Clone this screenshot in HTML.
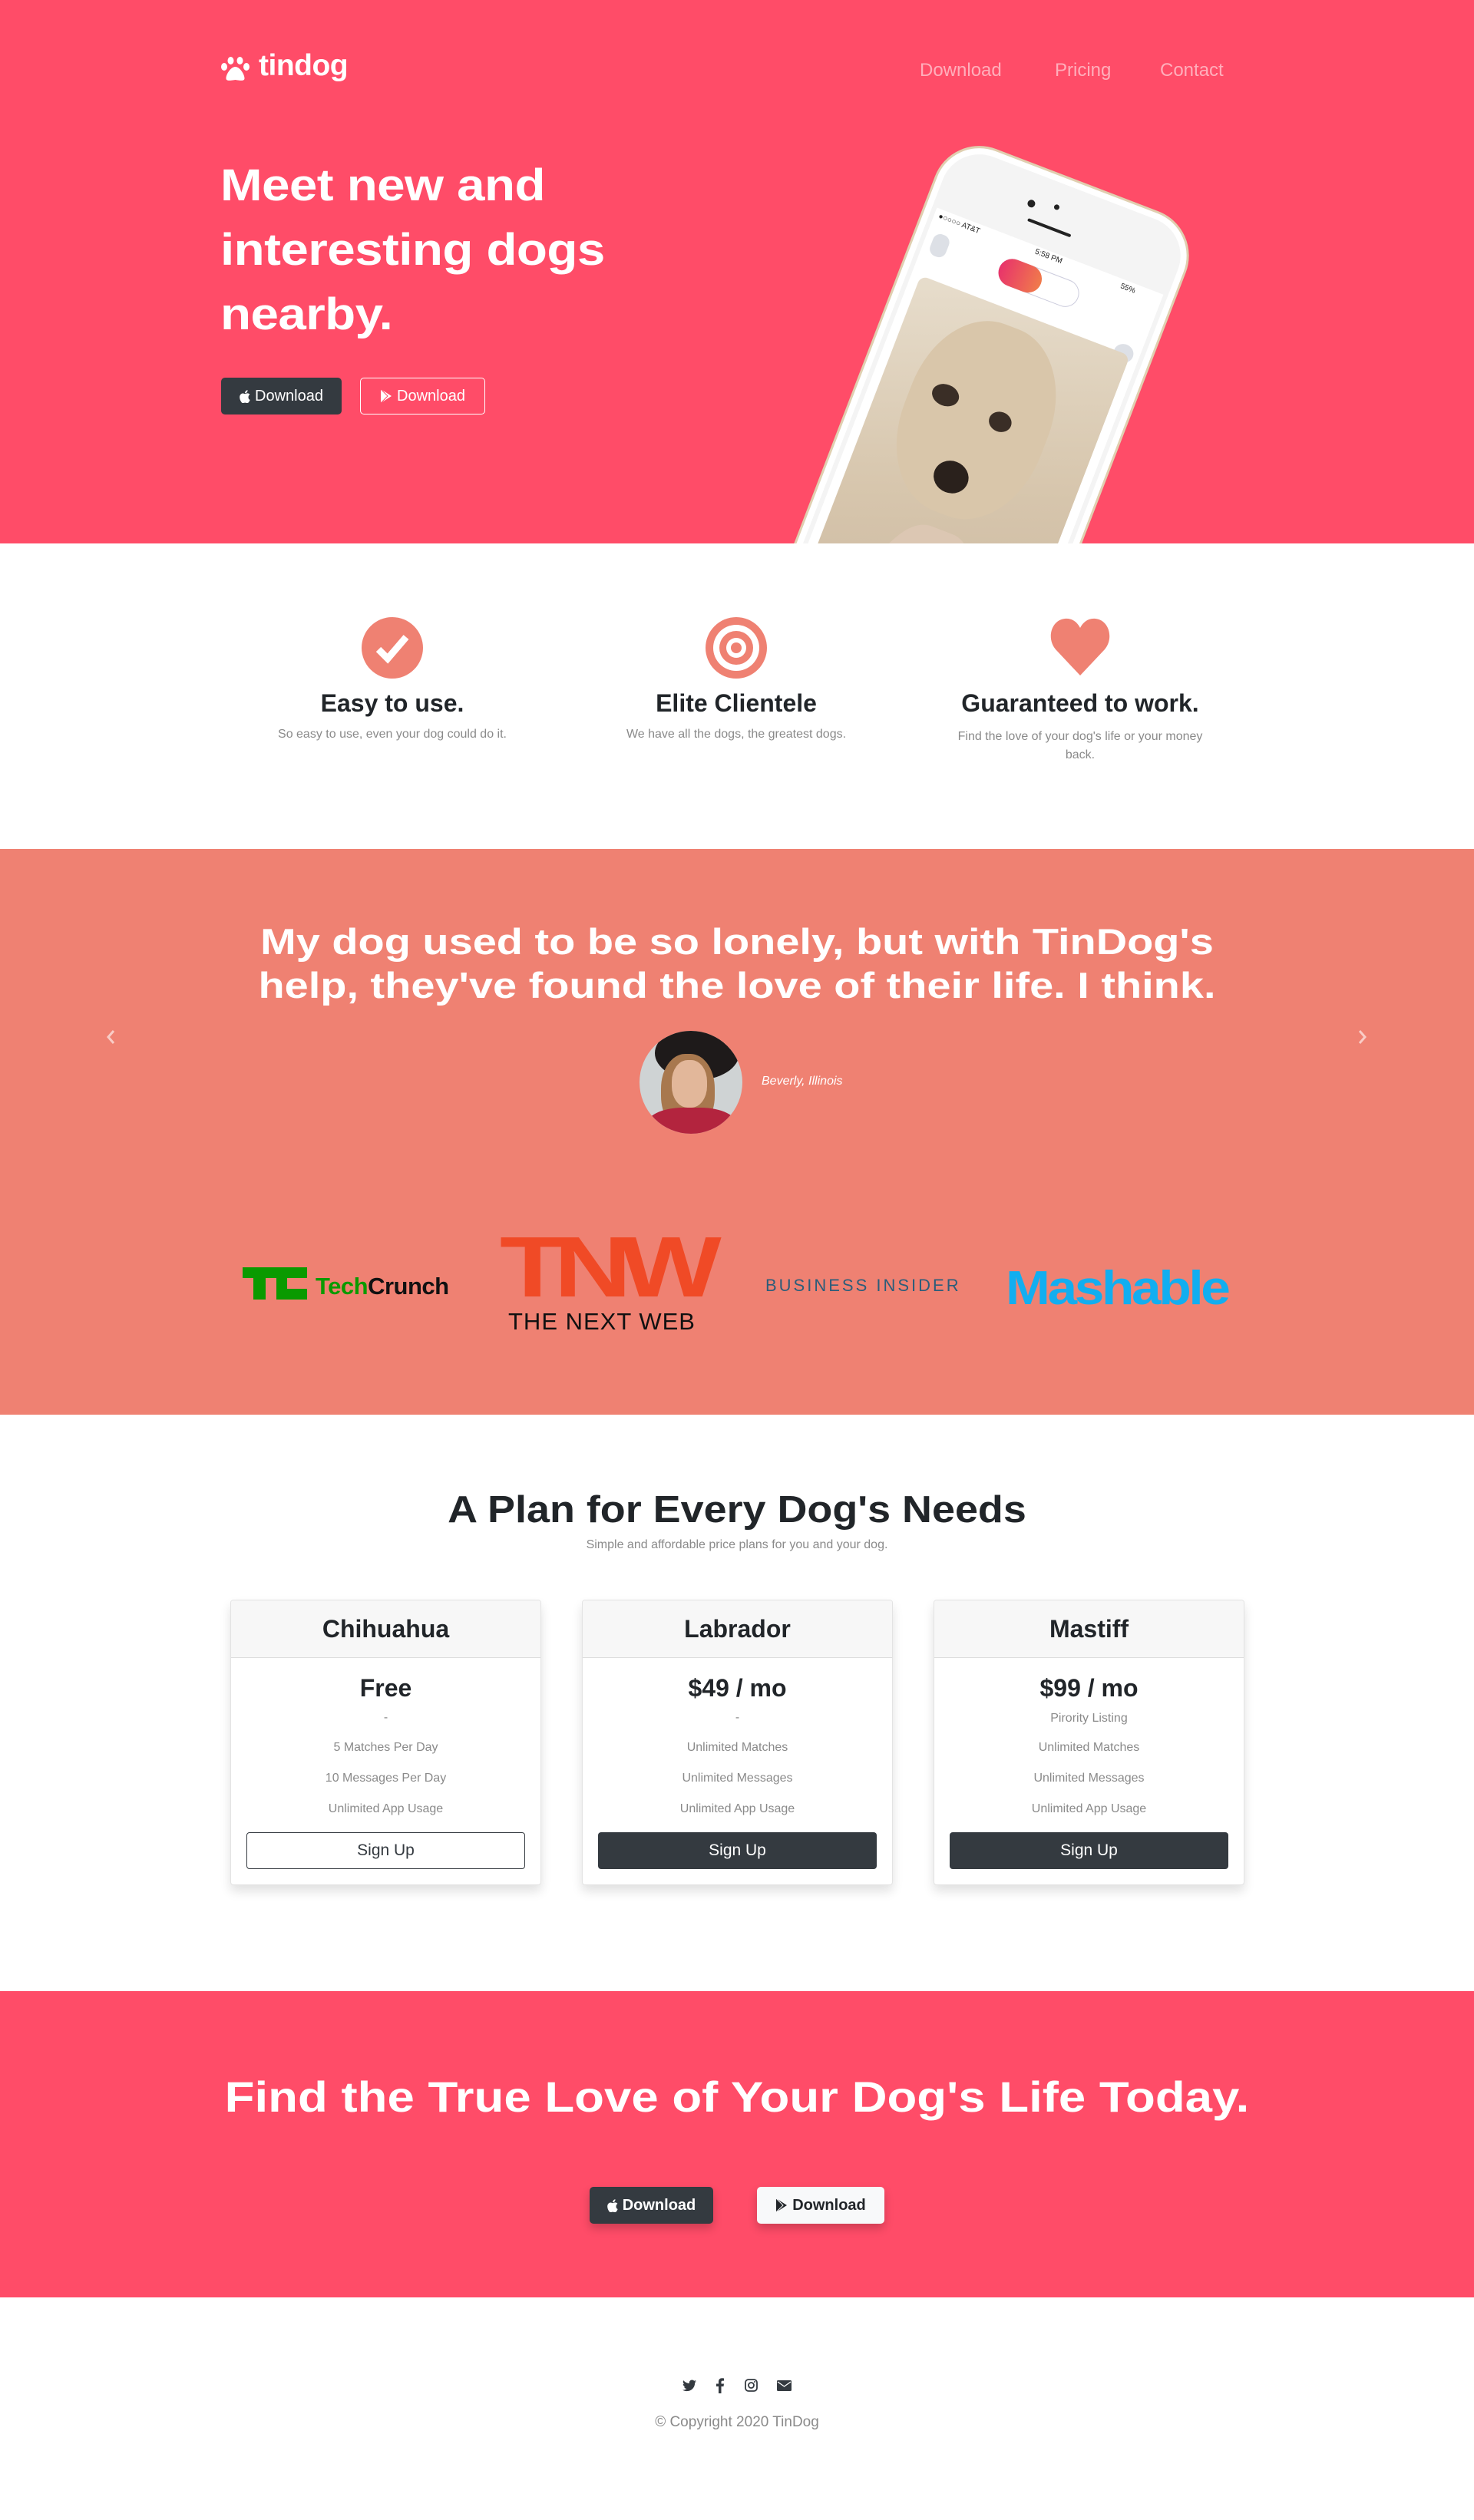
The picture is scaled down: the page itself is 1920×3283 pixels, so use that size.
<!DOCTYPE html>
<html><head><meta charset="utf-8">
<style>
*{margin:0;padding:0;box-sizing:border-box}
body{width:1920px;height:3283px;position:relative;font-family:"Liberation Sans",sans-serif;background:#fff;overflow:hidden}
.abs{position:absolute}
.sec{position:absolute;left:0;width:1920px}
.b{font-weight:700}
.btn{position:absolute;height:48px;border-radius:5px;font-size:20px;display:flex;align-items:center;justify-content:center;gap:6px}
.dark{background:#343a40;color:#fff}
.c{text-align:center}
.card{position:absolute;top:2084px;width:405px;height:372px;background:#fff;border:1px solid #e3e3e3;border-radius:4px;box-shadow:0 8px 14px rgba(0,0,0,.12);overflow:hidden}
.card .h{height:75px;background:#f7f7f7;border-bottom:1px solid #ddd;font-size:32px;font-weight:700;color:#212529;text-align:center;line-height:75px}
.card .p{position:absolute;top:96px;width:100%;text-align:center;font-size:32px;font-weight:700;color:#212529}
.card .li{position:absolute;width:100%;text-align:center;font-size:16px;color:#8a8a8a}
.card .s{position:absolute;left:20px;right:20px;top:302px;height:48px;border-radius:4px;font-size:21px;display:flex;align-items:center;justify-content:center}
</style></head><body>

<!-- HERO -->
<div class="sec" style="top:0;height:708px;background:#ff4c68;overflow:hidden">
  <svg class="abs" style="left:287px;top:74px" width="40" height="32" viewBox="0 0 40 32"><ellipse cx="5" cy="13" rx="4" ry="5" fill="#fff"/><ellipse cx="13.5" cy="5" rx="4" ry="5" fill="#fff"/><ellipse cx="25.5" cy="5" rx="4" ry="5" fill="#fff"/><ellipse cx="34" cy="13" rx="4" ry="5" fill="#fff"/><path d="M19.5 13c-6 0-12 10-12 15 0 4 5 3 12 2 7 1 12 2 12-2 0-5-6-15-12-15z" fill="#fff"/></svg>
  <div class="abs b" style="left:337px;top:64px;font-size:39px;color:#fff;letter-spacing:-0.5px">tindog</div>
  <div class="abs" style="left:1198px;top:78px;font-size:24px;color:rgba(255,255,255,.55)">Download</div>
  <div class="abs" style="left:1374px;top:78px;font-size:24px;color:rgba(255,255,255,.55)">Pricing</div>
  <div class="abs" style="left:1511px;top:78px;font-size:24px;color:rgba(255,255,255,.55)">Contact</div>
  <div class="abs b" style="left:287px;top:200px;font-size:58px;line-height:84px;color:#fff;font-weight:900;transform:scaleX(1.13);transform-origin:0 0;letter-spacing:-0.5px">Meet new and<br>interesting dogs<br>nearby.</div>
  <div class="btn dark" style="left:288px;top:492px;width:157px"><svg width="14" height="17" viewBox="0 0 14 17"><path d="M11.6 9c0-2 1.7-3 1.8-3-1-1.4-2.5-1.6-3-1.6-1.3-.1-2.5.8-3.2.8-.7 0-1.7-.8-2.8-.7C3 4.5 1.6 5.3.9 6.6c-1.5 2.6-.4 6.5 1.1 8.6.7 1 1.5 2.2 2.6 2.1 1-.1 1.4-.7 2.7-.7s1.6.7 2.7.7c1.1 0 1.8-1 2.5-2 .8-1.2 1.1-2.3 1.1-2.4 0 0-2.1-.8-2.1-3.2zM9.6 3c.6-.7 1-1.7.9-2.7-.9 0-1.9.6-2.5 1.3-.5.6-1 1.6-.9 2.6 1 .1 1.9-.5 2.5-1.2z" fill="#fff"/></svg>Download</div>
  <div class="btn" style="left:469px;top:492px;width:163px;border:1.5px solid #fff;color:#fff"><svg width="16" height="20" viewBox="0 0 16 20"><path d="M1 1l14 9-14 9z" fill="#fff"/><path d="M1 1l9 9-9 9" stroke="#ff4c68" stroke-width="1" fill="none"/></svg>Download</div>

  <!-- phone -->
  <div class="abs" style="left:1240px;top:172px;width:350px;height:820px;transform-origin:0 0;transform:rotate(21deg);background:#f4f4f4;border-radius:62px;border:3px solid #e0cfb0;box-shadow:inset 0 0 0 8px #fff">
    <div class="abs" style="left:122px;top:42px;width:10px;height:10px;border-radius:50%;background:#222"></div>
    <div class="abs" style="left:156px;top:36px;width:7px;height:7px;border-radius:50%;background:#222"></div>
    <div class="abs" style="left:130px;top:66px;width:60px;height:4px;border-radius:2px;background:#222"></div>
    <div class="abs" style="left:14px;top:96px;width:316px;height:720px;background:#fff">
      <div class="abs" style="left:6px;top:4px;font-size:10px;color:#222">●○○○○ AT&amp;T</div>
      <div class="abs" style="left:140px;top:2px;font-size:10px;color:#222">5:58 PM</div>
      <div class="abs" style="left:260px;top:4px;font-size:10px;color:#222">55%</div>
      <div class="abs" style="left:104px;top:26px;width:110px;height:36px;border-radius:18px;border:1px solid #ccd;background:#fff"></div>
      <div class="abs" style="left:104px;top:26px;width:58px;height:36px;border-radius:18px;background:linear-gradient(90deg,#e8336b,#f07b4b)"></div>
      <div class="abs" style="left:10px;top:30px;width:22px;height:30px;border-radius:10px;background:#dde0e6"></div>
      <div class="abs" style="left:282px;top:78px;width:26px;height:24px;border-radius:50%;background:#dde0e6"></div>
      <div class="abs" style="left:12px;top:90px;width:292px;height:630px;border-radius:10px;background:linear-gradient(160deg,#e7ddcc 0%,#d7c6ad 40%,#cbb8a0 70%,#a99a88 100%);overflow:hidden">
        <div class="abs" style="left:40px;top:20px;width:190px;height:260px;border-radius:45%;background:#d9c6aa"></div>
        <div class="abs" style="left:68px;top:120px;width:36px;height:28px;border-radius:50%;background:#3a2e26"></div>
        <div class="abs" style="left:150px;top:128px;width:30px;height:26px;border-radius:50%;background:#3a2e26"></div>
        <div class="abs" style="left:108px;top:210px;width:46px;height:42px;border-radius:50%;background:#2a211c"></div>
        <div class="abs" style="left:70px;top:300px;width:150px;height:330px;border-radius:40%;background:#dcc7b3"></div>
      </div>
    </div>
  </div>
</div>

<!-- FEATURES -->
<div class="sec" style="top:708px;height:398px;background:#fff">
  <svg class="abs" style="left:471px;top:96px" width="80" height="80" viewBox="0 0 80 80"><circle cx="40" cy="40" r="40" fill="#ef8172"/><path d="M22 42l12 12 24-28" stroke="#fff" stroke-width="9" fill="none"/></svg>
  <svg class="abs" style="left:919px;top:96px" width="80" height="80" viewBox="0 0 80 80"><circle cx="40" cy="40" r="40" fill="#ef8172"/><circle cx="40" cy="40" r="30" fill="#fff"/><circle cx="40" cy="40" r="22" fill="#ef8172"/><circle cx="40" cy="40" r="13" fill="#fff"/><circle cx="40" cy="40" r="7" fill="#ef8172"/></svg>
  <svg class="abs" style="left:1367px;top:96px" width="80" height="76" viewBox="0 0 80 76"><path d="M40 76L8 42C-4 28 2 4 20 2c9-1 16 4 20 12 4-8 11-13 20-12 18 2 24 26 12 40z" fill="#ef8172"/></svg>
  <div class="abs b c" style="left:311px;width:400px;top:190px;font-size:32px;color:#212529">Easy to use.</div>
  <div class="abs b c" style="left:759px;width:400px;top:190px;font-size:32px;color:#212529">Elite Clientele</div>
  <div class="abs b c" style="left:1207px;width:400px;top:190px;font-size:32px;color:#212529">Guaranteed to work.</div>
  <div class="abs c" style="left:311px;width:400px;top:240px;font-size:16px;color:#8a8a8a">So easy to use, even your dog could do it.</div>
  <div class="abs c" style="left:759px;width:400px;top:240px;font-size:16px;color:#8a8a8a">We have all the dogs, the greatest dogs.</div>
  <div class="abs c" style="left:1227px;width:360px;top:240px;font-size:16px;line-height:24px;color:#8a8a8a">Find the love of your dog's life or your money back.</div>
</div>

<!-- TESTIMONIAL -->
<div class="sec" style="top:1106px;height:737px;background:#ef8172">
  <div class="abs b c" style="left:0;width:1920px;top:92px;font-size:47px;line-height:57px;color:#fff;font-weight:900;transform:scaleX(1.19);transform-origin:960px 0">My dog used to be so lonely, but with TinDog's<br>help, they've found the love of their life. I think.</div>
  <div class="abs" style="left:833px;top:237px;width:134px;height:134px;border-radius:50%;overflow:hidden;background:#cfd3d4">
    <div class="abs" style="left:20px;top:-6px;width:110px;height:70px;border-radius:50%;background:#1e1a1a"></div>
    <div class="abs" style="left:28px;top:30px;width:70px;height:100px;border-radius:45%;background:#a8784e"></div>
    <div class="abs" style="left:42px;top:38px;width:46px;height:62px;border-radius:45%;background:#e2b79a"></div>
    <div class="abs" style="left:8px;top:100px;width:120px;height:60px;border-radius:40%;background:#b3243e"></div>
  </div>
  <div class="abs" style="left:992px;top:294px;font-size:16px;font-style:italic;color:#fff">Beverly, Illinois</div>
  <svg class="abs" style="left:137px;top:234px" width="14" height="22" viewBox="0 0 14 22"><path d="M11 3L4 11l7 8" stroke="rgba(255,255,255,.6)" stroke-width="3" fill="none"/></svg>
  <svg class="abs" style="left:1768px;top:234px" width="14" height="22" viewBox="0 0 14 22"><path d="M3 3l7 8-7 8" stroke="rgba(255,255,255,.6)" stroke-width="3" fill="none"/></svg>
  <!-- logos -->
  <svg class="abs" style="left:316px;top:545px" width="86" height="42" viewBox="0 0 86 42"><path d="M0 0h44v14H30v28H14V14H0zM44 0h40v14H58v14h26v14H44z" fill="#0a9a00"/></svg>
  <div class="abs b" style="left:411px;top:552px;font-size:31px;color:#0a9a00;letter-spacing:-0.5px">Tech<span style="color:#111">Crunch</span></div>
  <div class="abs b" style="left:651px;top:495px;font-size:112px;line-height:100px;color:#f04a26;letter-spacing:-12px;font-weight:900;transform:scaleX(1.25);transform-origin:0 0">TNW</div>
  <div class="abs" style="left:662px;top:598px;font-size:31px;color:#111;letter-spacing:1px">THE NEXT WEB</div>
  <div class="abs" style="left:997px;top:556px;font-size:22px;color:#2c5d7a;letter-spacing:3px">BUSINESS INSIDER</div>
  <div class="abs b" style="left:1310px;top:537px;font-size:62px;color:#12aef0;letter-spacing:-3px;transform:scaleX(1.12);transform-origin:0 0">Mashable</div>
</div>

<!-- PRICING -->
<div class="sec" style="top:1843px;height:753px;background:#fff">
  <div class="abs b c" style="left:0;width:1920px;top:96px;font-size:49px;color:#212529;font-weight:900;transform:scaleX(1.1);transform-origin:960px 0">A Plan for Every Dog's Needs</div>
  <div class="abs c" style="left:0;width:1920px;top:161px;font-size:16px;color:#8a8a8a">Simple and affordable price plans for you and your dog.</div>
</div>
<div class="card" style="left:300px">
  <div class="h">Chihuahua</div><div class="p">Free</div>
  <div class="li" style="top:144px">-</div><div class="li" style="top:183px">5 Matches Per Day</div><div class="li" style="top:223px">10 Messages Per Day</div><div class="li" style="top:263px">Unlimited App Usage</div>
  <div class="s" style="border:1.5px solid #343a40;color:#343a40">Sign Up</div>
</div>
<div class="card" style="left:758px">
  <div class="h">Labrador</div><div class="p">$49 / mo</div>
  <div class="li" style="top:144px">-</div><div class="li" style="top:183px">Unlimited Matches</div><div class="li" style="top:223px">Unlimited Messages</div><div class="li" style="top:263px">Unlimited App Usage</div>
  <div class="s dark">Sign Up</div>
</div>
<div class="card" style="left:1216px">
  <div class="h">Mastiff</div><div class="p">$99 / mo</div>
  <div class="li" style="top:145px">Pirority Listing</div><div class="li" style="top:183px">Unlimited Matches</div><div class="li" style="top:223px">Unlimited Messages</div><div class="li" style="top:263px">Unlimited App Usage</div>
  <div class="s dark">Sign Up</div>
</div>

<!-- CTA -->
<div class="sec" style="top:2594px;height:399px;background:#ff4c68">
  <div class="abs b c" style="left:0;width:1920px;top:105px;font-size:56px;color:#fff;font-weight:900;transform:scaleX(1.135);transform-origin:960px 0">Find the True Love of Your Dog's Life Today.</div>
  <div class="btn dark b" style="left:768px;top:255px;width:161px;box-shadow:0 6px 12px rgba(0,0,0,.2)"><svg width="14" height="17" viewBox="0 0 14 17"><path d="M11.6 9c0-2 1.7-3 1.8-3-1-1.4-2.5-1.6-3-1.6-1.3-.1-2.5.8-3.2.8-.7 0-1.7-.8-2.8-.7C3 4.5 1.6 5.3.9 6.6c-1.5 2.6-.4 6.5 1.1 8.6.7 1 1.5 2.2 2.6 2.1 1-.1 1.4-.7 2.7-.7s1.6.7 2.7.7c1.1 0 1.8-1 2.5-2 .8-1.2 1.1-2.3 1.1-2.4 0 0-2.1-.8-2.1-3.2zM9.6 3c.6-.7 1-1.7.9-2.7-.9 0-1.9.6-2.5 1.3-.5.6-1 1.6-.9 2.6 1 .1 1.9-.5 2.5-1.2z" fill="#fff"/></svg>Download</div>
  <div class="btn b" style="left:986px;top:255px;width:166px;background:#f8f9fa;color:#212529;box-shadow:0 6px 12px rgba(0,0,0,.2)"><svg width="16" height="20" viewBox="0 0 16 20"><path d="M1 1l14 9-14 9z" fill="#212529"/><path d="M1 1l9 9-9 9" stroke="#f8f9fa" stroke-width="1" fill="none"/></svg>Download</div>
</div>

<!-- FOOTER -->
<svg class="abs" style="left:889px;top:3100px" width="18" height="16" viewBox="0 0 24 20"><path d="M24 2.4c-.9.4-1.8.7-2.8.8 1-.6 1.8-1.6 2.2-2.7-1 .6-2 1-3.1 1.2C19.3.7 18 0 16.6 0c-2.7 0-4.9 2.2-4.9 4.9 0 .4 0 .8.1 1.1C7.7 5.8 4.1 3.9 1.700.9c-.4.7-.7 1.600-.7 2.500 0 1.700.9 3.200 2.200 4.100-.8 0-1.600-.2-2.200-.6v.1c0 2.400 1.700 4.400 3.900 4.800-.4.1-.8.2-1.300.2-.3 0-.6 0-.9-.1.6 2 2.400 3.400 4.600 3.400-1.700 1.300-3.800 2.100-6.100 2.100-.4 0-.8 0-1.200-.1 2.200 1.400 4.800 2.200 7.500 2.200 9.100 0 14-7.500 14-14v-.6c1-.7 1.800-1.600 2.500-2.500z" fill="#343a40"/></svg>
<svg class="abs" style="left:933px;top:3098px" width="10" height="20" viewBox="0 0 10 20"><path d="M6.5 20V11h3l.5-3.5H6.5V5.3c0-1 .3-1.7 1.7-1.7H10V.5C9.7.4 8.6.3 7.4.3 4.8.3 3 1.9 3 4.8v2.7H0V11h3v9z" fill="#343a40"/></svg>
<svg class="abs" style="left:970px;top:3099px" width="17" height="17" viewBox="0 0 17 17"><rect x="1" y="1" width="15" height="15" rx="4" stroke="#343a40" stroke-width="1.8" fill="none"/><circle cx="8.5" cy="8.5" r="3.5" stroke="#343a40" stroke-width="1.8" fill="none"/><circle cx="13" cy="4" r="1" fill="#343a40"/></svg>
<svg class="abs" style="left:1012px;top:3101px" width="19" height="14" viewBox="0 0 19 14"><rect width="19" height="14" rx="1.5" fill="#343a40"/><path d="M1 2l8.5 6L18 2" stroke="#fff" stroke-width="1.3" fill="none"/></svg>
<div class="abs c" style="left:0;width:1920px;top:3145px;font-size:19px;color:#8a8a8a">© Copyright 2020 TinDog</div>

</body></html>
